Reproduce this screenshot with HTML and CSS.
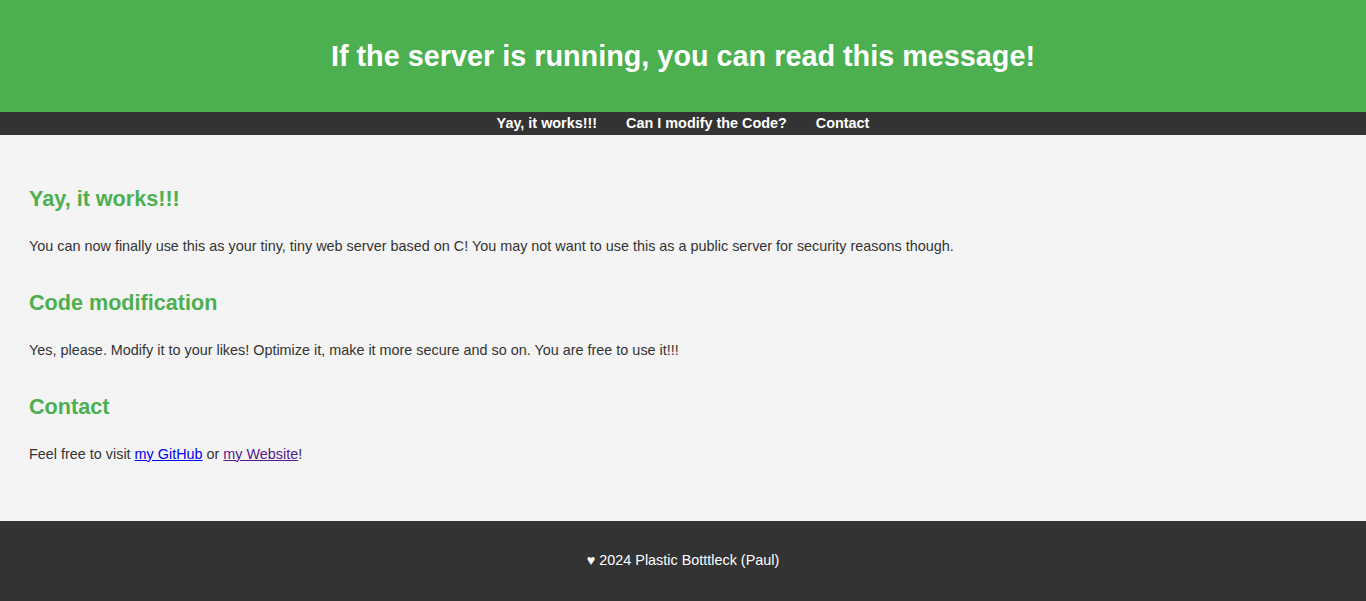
FILE: index.html
```html
<!DOCTYPE html>
<html lang="en">
<head>
<meta charset="utf-8">
<title>Tiny C Web Server</title>
<link rel="stylesheet" href="styles.css">
</head>
<body>
<header class="site-header">
  <h1 class="site-title">If the server is running, you can read this message!</h1>
</header>
<nav class="site-nav">
  <a href="#works">Yay, it works!!!</a>
  <a href="#modify">Can I modify the Code?</a>
  <a href="#contact">Contact</a>
</nav>
<main class="content">
  <section id="works" class="block">
    <h2>Yay, it works!!!</h2>
    <p>You can now finally use this as your tiny, tiny web server based on C! You may not want to use this as a public server for security reasons though.</p>
  </section>
  <section id="modify" class="block">
    <h2>Code modification</h2>
    <p>Yes, please. Modify it to your likes! Optimize it, make it more secure and so on. You are free to use it!!!</p>
  </section>
  <section id="contact" class="block">
    <h2>Contact</h2>
    <p>Feel free to visit <a class="link" href="#github">my GitHub</a> or <a class="link visited" href="#website">my Website</a>!</p>
  </section>
</main>
<footer class="site-footer">
  <p>&#9829; 2024 Plastic Botttleck (Paul)</p>
</footer>
</body>
</html>
```
FILE: styles.css
```css
html, body {
  margin: 0;
  padding: 0;
}
body {
  font-family: "Liberation Sans", Arial, sans-serif;
  font-size: 14.4px;
  line-height: 1.6;
  background: #f4f4f4;
  color: #333;
}
.site-header {
  background: #4caf50;
  color: #fff;
  height: 112px;
  display: flex;
  align-items: center;
  justify-content: center;
}
.site-title {
  margin: 0;
  font-size: 28.8px;
  font-weight: bold;
  line-height: 1.2;
}
.site-nav {
  background: #333;
  height: 23px;
  display: flex;
  justify-content: center;
  align-items: center;
  gap: 29px;
}
.site-nav a {
  color: #fff;
  text-decoration: none;
  font-weight: bold;
}
.content {
  display: flex;
  flex-direction: column;
  gap: 28.5px;
  padding: 47px 29px 55px;
}
.block h2 {
  color: #4caf50;
  font-size: 21.6px;
  margin: 0 0 18px;
}
.block p {
  margin: 0;
}
.link {
  color: #0000ee;
}
.link.visited {
  color: #551a8b;
}
.site-footer {
  background: #333;
  color: #fff;
  height: 80px;
  display: flex;
  align-items: center;
  justify-content: center;
}
.site-footer p {
  margin: 0;
}
```
